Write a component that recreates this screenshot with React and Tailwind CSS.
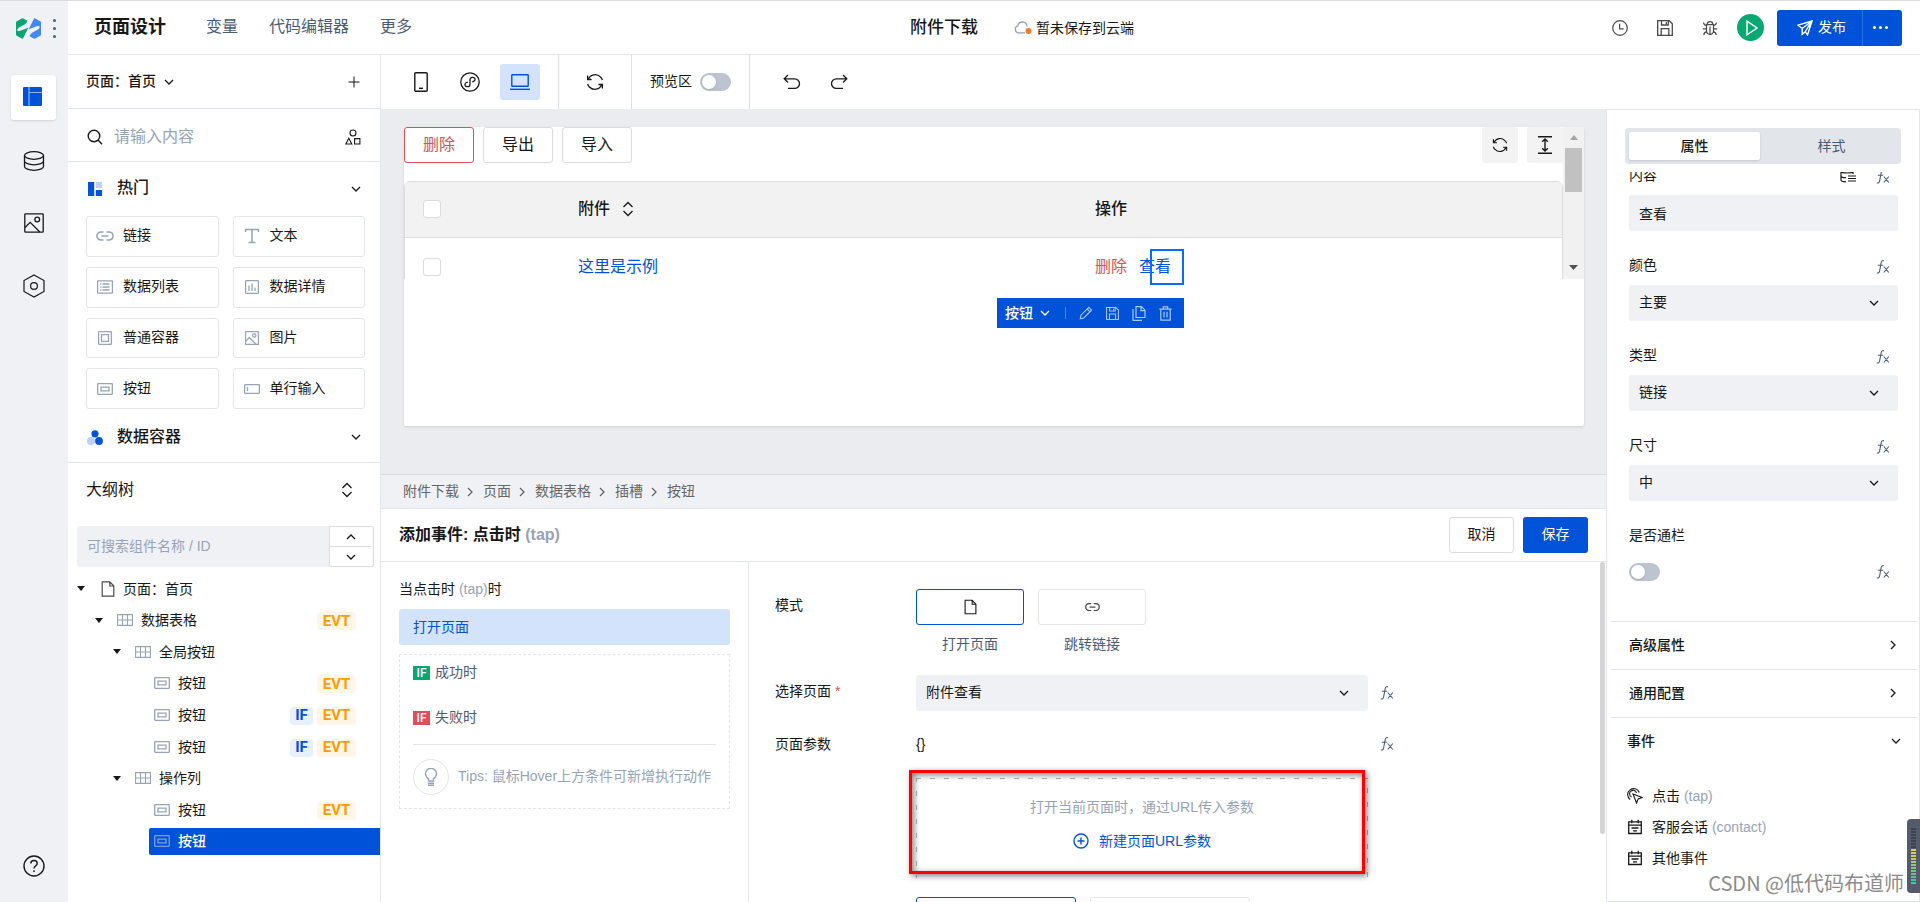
import React from "react";

const FONT = "font-['Liberation_Sans','Noto_Sans_CJK_SC',sans-serif]";

/* ---------- icons ---------- */

function Svg({ w = 16, h, box, className = "", sw = 1.2, children }) {
  return (
    <svg
      width={w}
      height={h || w}
      viewBox={box || `0 0 ${w} ${h || w}`}
      fill="none"
      stroke="currentColor"
      strokeWidth={sw}
      className={`shrink-0 ${className}`}
      aria-hidden="true"
    >
      {children}
    </svg>
  );
}

const ChevronDown = ({ className }) => (
  <Svg w={10} h={8} sw={1.3} className={className}><path d="M1 2l4 4 4-4" /></Svg>
);
const ChevronUp = ({ className }) => (
  <Svg w={10} h={8} sw={1.3} className={className}><path d="M1 6l4-4 4 4" /></Svg>
);
const ChevronRight = ({ className }) => (
  <Svg w={8} h={10} sw={1.3} className={className}><path d="M2 1l4 4-4 4" /></Svg>
);
const SortIcon = ({ className }) => (
  <Svg w={12} h={16} sw={1.3} className={className}><path d="M1.500 6L6 1.500 10.500 6M1.500 10L6 14.500 10.500 10" /></Svg>
);
const FxIcon = ({ className = "" }) => (
  <Svg w={14} h={14} sw={1.1} className={`text-[#4b5b76] ${className}`}>
    <path d="M8 .8C6.500 .3 5.500 1 5.200 2.600L3.600 11c-.3 1.600-1.200 2.300-2.800 2M1.800 5.300h5.400M7.800 6.500l5 6M12.800 6.500l-5 6" />
  </Svg>
);
const Logo = () => (
  <svg width="25" height="21" viewBox="0 0 25 21" className="shrink-0" aria-hidden="true">
    <path d="M0 4.500Q0 3.800 .8 3.300L5.800 .4Q6.500 0 7.200 .4L11.500 2.800Q11 5.200 8.500 6.600L3 9.600Q1 11 1.200 12.400 2.500 13.500 5 12.600L12.300 9.800 7 20.400Q6.500 21 5.800 20.600L.8 17.700Q0 17.200 0 16.500z" fill="#0aa574" />
    <path d="M25 16.500Q25 17.200 24.200 17.700L19.200 20.600Q18.500 21 17.800 20.600L13.500 18.200Q14 15.800 16.500 14.400L22 11.400Q24 10 23.800 8.600 22.500 7.500 20 8.400L12.700 11.200 18 .6Q18.500 0 19.200 .4L24.200 3.300Q25 3.800 25 4.500z" fill="#4386f5" />
  </svg>
);
const GridFill = () => (
  <svg width="19" height="19" viewBox="0 0 19 19" className="shrink-0" aria-hidden="true">
    <rect width="19" height="19" rx="1.200" fill="#0052d9" />
    <path d="M6 0v19M6 5.500h13" stroke="#8fb6f7" strokeWidth="1.200" />
  </svg>
);
const DbIcon = () => (
  <Svg w={22} h={20} sw={1.3}>
    <ellipse cx="11" cy="4.500" rx="9.500" ry="3.800" />
    <path d="M1.500 4.500v11c0 2.100 4.200 3.800 9.500 3.800s9.500-1.700 9.500-3.800v-11M1.500 10C1.500 12.100 5.700 13.800 11 13.800s9.500-1.700 9.500-3.800" />
  </Svg>
);
const ImageIcon = ({ w = 20, sw = 1.3, className }) => (
  <Svg w={w} box="0 0 20 20" sw={sw} className={className}>
    <rect x=".8" y=".8" width="18.400" height="18.400" rx=".8" />
    <circle cx="13.200" cy="6.500" r="2.400" />
    <path d="M1 14.500l5.200-5.200 9.600 9.700" />
  </Svg>
);
const HexIcon = () => (
  <Svg w={22} h={24} sw={1.2}>
    <path d="M11 1l10 5.500v11L11 23 1 17.500v-11z" />
    <circle cx="11" cy="12" r="3.400" />
  </Svg>
);
const HelpIcon = () => (
  <Svg w={22} sw={1.4}>
    <circle cx="11" cy="11" r="10" />
    <path d="M7.800 8.500c0-4 6.400-4 6.400 0 0 2.200-3.200 2.300-3.200 5M11 15.300v1.700" />
  </Svg>
);
const SearchIcon = () => (
  <Svg w={16} sw={1.4}><circle cx="7" cy="7" r="5.800" /><path d="M11 11l4 4.200" /></Svg>
);
const ShapesIcon = () => (
  <Svg w={16} sw={1.1}><circle cx="8" cy="4" r="3" /><path d="M3.800 9.200l3 5.800H.9zM9.600 9.600h5.300V15H9.600z" /></Svg>
);
const PlusIcon = () => (
  <Svg w={12} sw={1}><path d="M6 .5v11M.5 6h11" /></Svg>
);
const HotIcon = () => (
  <svg width="14" height="14" viewBox="0 0 14 14" className="shrink-0" aria-hidden="true">
    <path d="M0 0h6.200v14H0zM7.800 8H14v6H7.800z" fill="#0052d9" /><path d="M7.800 0H14v6.200H7.800z" fill="#bbd3fb" />
  </svg>
);
const DataIcon = () => (
  <svg width="16" height="15" viewBox="0 0 16 15" className="shrink-0" aria-hidden="true">
    <circle cx="4" cy="11" r="4" fill="#bbd3fb" /><circle cx="8" cy="3.800" r="3.600" fill="#0052d9" /><circle cx="12" cy="11" r="3.900" fill="#0052d9" />
  </svg>
);
const LinkIcon = ({ w = 18, sw = 1.5 }) => (
  <Svg w={w} h={w * 10 / 18} box="0 0 18 10" sw={sw}>
    <path d="M7.500 .9H5a4.100 4.100 0 000 8.200h2.500M10.500 .9H13a4.100 4.100 0 010 8.200h-2.500M5.500 5h7" />
  </Svg>
);
const TextIcon = () => (
  <Svg w={18} h={16} sw={1.5}><path d="M2.500 4V1.500h13V4M9 1.500v13M5.500 14.500h7" /></Svg>
);
const ListIcon = () => (
  <Svg w={18} h={14} sw={1.3}><rect x="1.600" y=".8" width="14.800" height="12.400" rx=".5" /><path d="M4.200 4h1.300M6.500 4h7M4.200 7h1.300M6.500 7h7M4.200 10h1.300M6.500 10h7" /></Svg>
);
const DetailIcon = () => (
  <Svg w={18} h={14} sw={1.3}><rect x="2.600" y=".7" width="12.800" height="12.600" rx=".5" /><path d="M6 5.500V11M9 3.500V11M12 7.500V11" /></Svg>
);
const BoxIcon = () => (
  <Svg w={18} h={14} sw={1.3}><rect x="2.600" y=".7" width="12.800" height="12.600" rx=".5" /><path d="M5.500 3.600h7v6.800h-7z" /></Svg>
);
const ButtonIcon = ({ className }) => (
  <Svg w={16} h={12} sw={1.3} className={className}><rect x=".7" y=".7" width="14.600" height="10.600" rx=".5" /><path d="M4 4.200h8v3.600H4z" /></Svg>
);
const InputIcon = () => (
  <Svg w={18} h={10} sw={1.3}><rect x="1.600" y=".7" width="14.800" height="8.600" rx=".5" /><path d="M4.500 3v4" /></Svg>
);
const TableIcon = () => (
  <Svg w={16} h={12} sw={1.1}><path d="M.6.6h14.800v10.800H.6zM.6 6h14.800M5.500.6v10.800M10.500.6v10.800" /></Svg>
);
const FileIcon = ({ w = 14, h = 16 }) => (
  <Svg w={w} h={h} box="0 0 14 16" sw={1.2}><path d="M1.200 .8h7.600l4 4.200v10.200H1.200zM8.800 .8V5h4" /></Svg>
);
const Caret = () => (
  <svg width="8" height="5" viewBox="0 0 8 5" fill="#181818" aria-hidden="true"><path d="M0 0h8L4 5z" /></svg>
);
const PhoneIcon = () => (
  <Svg w={14} h={20} sw={1.4}><rect x=".8" y=".8" width="12.400" height="18.400" rx="1" /><path d="M5 16.300h4" /></Svg>
);
const MiniProgramIcon = () => (
  <Svg w={20} sw={1.3}>
    <circle cx="10" cy="10" r="9.200" />
    <path d="M7.800 10.200C5.500 10.600 4.700 12 5 13.200c.7 2.200 5 2 5-.8V7.600c0-2.800 4.300-3 5-.8.3 1.200-.5 2.600-2.800 3" />
  </Svg>
);
const LaptopIcon = () => (
  <Svg w={20} h={16} sw={1.4}><rect x="1.800" y=".8" width="16.400" height="11.400" rx=".5" /><path d="M0 15.300h20" /></Svg>
);
const RefreshIcon = ({ w = 18 }) => (
  <Svg w={w} box="0 0 18 18" sw={1.3}>
    <path d="M2.300 6.200A7.400 7.400 0 0114.500 4M1.600 11a7.400 7.400 0 001.900 3.200M15.700 11.800A7.400 7.400 0 013.500 14M16.400 7a7.400 7.400 0 00-1.900-3M1.600 2.500v4h4M16.400 15.500v-4h-4" />
  </Svg>
);
const UndoIcon = ({ className }) => (
  <Svg w={18} h={16} sw={1.3} className={className}><path d="M5 1L1.200 4.800 5 8.500M1.500 4.800h10.200a4.800 4.800 0 010 9.600H5" /></Svg>
);
const HeightIcon = () => (
  <Svg w={14} h={18} sw={1.4}><path d="M0 .8h14M0 17.200h14M7 3v12M4.200 5.800L7 3l2.800 2.800M4.200 12.200L7 15l2.800-2.800" /></Svg>
);
const CloudIcon = () => (
  <svg width="18" height="14" viewBox="0 0 18 14" fill="none" className="shrink-0" aria-hidden="true">
    <path d="M11 11.800H4.500A3.600 3.600 0 013.800 4.800a4.700 4.700 0 019.300.6" stroke="#97a3b7" strokeWidth="1.300" />
    <circle cx="14.500" cy="10" r="3" fill="#ed7b2f" />
  </svg>
);
const ClockIcon = () => (
  <Svg w={16}><circle cx="8" cy="8" r="7.300" /><path d="M7.600 3.800v5h4" /></Svg>
);
const SaveIcon = ({ w = 16 }) => (
  <Svg w={w} box="0 0 16 16" sw={1.3}><path d="M.7 .7h11.600l3 3v11.600H.7zM4.500 .7V5h6.800V.7M4.200 15V8.600h7.600V15M9.300 2v2" /></Svg>
);
const BugIcon = () => (
  <Svg w={16} sw={1.2}><path d="M5.200 4.500a2.800 2.800 0 015.600 0zM4.500 4.600h7v6.200a3.500 3.500 0 01-7 0zM8 6.500v7.500M1.500 2.500c.3 2 1.500 2.800 3 3M14.500 2.500c-.3 2-1.500 2.800-3 3M.8 8.800h3.700M11.500 8.800h3.700M1.800 15c.2-2 1.300-3 2.900-3.300M14.200 15c-.2-2-1.300-3-2.900-3.300" /></Svg>
);
const PlaneIcon = () => (
  <Svg w={16} sw={1.4}><path d="M15 1L1 5.200l4.200 3.300v5.800l3-2.600 2.300 3.200zM15 1L5.200 8.500M15 1L8.200 11.700" /></Svg>
);
const PencilIcon = () => (
  <Svg w={14} sw={1.1}><path d="M1.200 12.800l.8-3.600L9.800 1.400l2.800 2.800L4.800 12zM8.200 3l2.800 2.800" /></Svg>
);
const CopyIcon = () => (
  <Svg w={14} h={15} sw={1.2}><path d="M4 .7h5.500l3.500 3.500v7.300H4zM9 .7v4h4M1 3v11.300h9" /></Svg>
);
const TrashIcon = () => (
  <Svg w={13} h={15} sw={1.2}><path d="M.3 3.200h12.400M1.800 3.200v11h9.400v-11M4.300 3V.8h4.400V3M5 5.800v5.800M8 5.800v5.800" /></Svg>
);
const BulbIcon = () => (
  <Svg w={14} h={18} sw={1.4}><path d="M4.500 13v-2.300a5.500 5.500 0 115 0V13zM4 15.200h6M4 17.200h6" /></Svg>
);
const TapIcon = () => (
  <Svg w={16} sw={1.1}><path d="M3.200 11.500A6 6 0 1112.300 4.500M4.500 9A3.500 3.500 0 119.500 5M6 6l9 3.500-3.800 1.500L9.500 15z" /></Svg>
);
const CalendarIcon = () => (
  <Svg w={16} sw={1.3}><path d="M1.700 2.800h12.600v11.700H1.700zM1.700 6.200h12.600M4.800 .8v3.400M11.200 .8v3.400M4.500 9h7M6 11.800h4" /></Svg>
);
const CirclePlus = () => (
  <Svg w={16} sw={1.4}><circle cx="8" cy="8" r="7" /><path d="M8 4.500v7M4.500 8h7" /></Svg>
);

/* ---------- small parts ---------- */

function Toggle({ label }) {
  return (
    <input
      type="checkbox"
      role="switch"
      aria-label={label}
      className="h-[18px] w-[31px] shrink-0 appearance-none rounded-full bg-[#bcc4d0] before:m-[2px] before:block before:size-[14px] before:rounded-full before:bg-white before:shadow before:content-['']"
    />
  );
}

function Select({ label, value }) {
  return (
    <div className="relative h-9 w-full">
      <select aria-label={label} className="h-9 w-full appearance-none rounded-[3px] bg-[#f0f1f5] px-[10px] pb-[2px] text-sm text-[#181818]">
        <option>{value}</option>
      </select>
      <ChevronDown className="pointer-events-none absolute right-[19px] top-[14px]" />
    </div>
  );
}

function Fx() {
  return <button type="button" aria-label="fx" className="shrink-0"><FxIcon /></button>;
}

/* ---------- data ---------- */

const COMPONENTS = [
  { name: "链接", icon: <LinkIcon /> },
  { name: "文本", icon: <TextIcon /> },
  { name: "数据列表", icon: <ListIcon /> },
  { name: "数据详情", icon: <DetailIcon /> },
  { name: "普通容器", icon: <BoxIcon /> },
  { name: "图片", icon: <ImageIcon w={14} sw={1.8} className="mx-[2px]" /> },
  { name: "按钮", icon: <ButtonIcon className="mx-px" /> },
  { name: "单行输入", icon: <InputIcon /> },
];

const TREE = [
  { name: "页面：首页", pad: "pl-[9px]", kind: "page" },
  { name: "数据表格", pad: "pl-[27px]", kind: "table", evt: true },
  { name: "全局按钮", pad: "pl-[45px]", kind: "table" },
  { name: "按钮", pad: "pl-[81px]", evt: true },
  { name: "按钮", pad: "pl-[81px]", evt: true, cond: true },
  { name: "按钮", pad: "pl-[81px]", evt: true, cond: true },
  { name: "操作列", pad: "pl-[45px]", kind: "table" },
  { name: "按钮", pad: "pl-[81px]", evt: true },
  { name: "按钮", pad: "pl-[81px]", active: true },
];

const CRUMBS = ["附件下载", "页面", "数据表格", "插槽", "按钮"];

const METER = [
  "bg-[#3d424f]", "bg-[#3d424f]", "bg-[#3d424f]", "bg-[#3d424f]", "bg-[#3d424f]", "bg-[#3d424f]", "bg-[#3d424f]",
  "bg-[#e8cf4a]", "bg-[#dccb4f]", "bg-[#d0cc58]", "bg-[#bccb62]", "bg-[#a8c96c]", "bg-[#94c876]",
  "bg-[#80c67e]", "bg-[#6cc488]", "bg-[#5ec492]", "bg-[#54c49a]", "bg-[#4cc4a0]", "bg-[#46c4a4]",
];

/* ---------- sections ---------- */

function Rail() {
  return (
    <nav className="flex w-[68px] shrink-0 flex-col items-center bg-[#f0f1f5] pr-px text-[#181818]">
      <div className="flex h-[54px] w-full items-center gap-3 pl-4">
        <Logo />
        <button type="button" aria-label="菜单" className="flex flex-col gap-[5px]">
          <span className="size-[3px] rounded-full bg-[#4b5b76]" />
          <span className="size-[3px] rounded-full bg-[#4b5b76]" />
          <span className="size-[3px] rounded-full bg-[#4b5b76]" />
        </button>
      </div>
      <button type="button" aria-label="页面" className="mt-5 flex size-[45px] items-center justify-center rounded-[3px] bg-white pb-[2px] pr-[2px] shadow">
        <GridFill />
      </button>
      <button type="button" aria-label="数据" className="mt-[31px]"><DbIcon /></button>
      <button type="button" aria-label="素材" className="mt-[42px]"><ImageIcon /></button>
      <button type="button" aria-label="设置" className="mt-[41px]"><HexIcon /></button>
      <button type="button" aria-label="帮助" className="mb-[25px] mt-auto"><HelpIcon /></button>
    </nav>
  );
}

function Header() {
  return (
    <header className="flex h-[54px] shrink-0 items-center border-b border-[#e6e8ed] pl-[26px] pr-[18px]">
      <div className="flex flex-[17] items-center pb-[2px]">
        <h1 className="text-lg font-bold text-[#181818]">页面设计</h1>
        <div className="ml-10 flex gap-[31px] text-base text-[#4b5b76]">
          <button type="button">变量</button>
          <button type="button">代码编辑器</button>
          <button type="button">更多</button>
        </div>
      </div>
      <div className="flex items-center">
        <span className="text-[17px] font-medium text-[#181818]">附件下载</span>
        <span className="ml-9 flex items-center gap-1 text-sm text-[#181818]"><CloudIcon />暂未保存到云端</span>
      </div>
      <div className="flex flex-[16] items-center justify-end text-[#4a4a4a]">
        <button type="button" aria-label="历史"><ClockIcon /></button>
        <button type="button" aria-label="保存" className="ml-[29px]"><SaveIcon /></button>
        <button type="button" aria-label="调试" className="ml-[29px]"><BugIcon /></button>
        <button type="button" aria-label="预览" className="ml-[19px] flex size-[27px] items-center justify-center rounded-full bg-[#07a872] pl-[2px] text-white">
          <Svg w={12} h={16} sw={1.4}><path d="M1 1.200L11 8 1 14.800z" /></Svg>
        </button>
        <div className="ml-[13px] flex h-9 overflow-hidden rounded-[3px] bg-[#0052d9] text-sm text-white">
          <button type="button" className="flex w-[86px] items-center justify-center gap-[5px] border-r border-[#2b6fe0] pl-1">
            <PlaneIcon /><span className="pb-[2px]">发布</span>
          </button>
          <button type="button" aria-label="更多" className="flex w-[39px] items-center justify-center gap-[3px] pr-[5px]">
            <span className="size-[3px] rounded-full bg-white" />
            <span className="size-[3px] rounded-full bg-white" />
            <span className="size-[3px] rounded-full bg-white" />
          </button>
        </div>
      </div>
    </header>
  );
}

function LeftPanel() {
  return (
    <aside className="flex w-[313px] shrink-0 flex-col border-r border-[#e2e5ea] text-[#181818]">
      <div className="flex h-[54px] shrink-0 items-center justify-between border-b border-[#e2e5ea] pl-[18px] pr-5">
        <button type="button" className="flex items-center gap-2 text-sm font-medium"><span className="pb-[2px]">页面：首页</span><ChevronDown /></button>
        <button type="button" aria-label="新建页面"><PlusIcon /></button>
      </div>
      <div className="flex h-[53px] shrink-0 items-center border-b border-[#e2e5ea] pl-[19px] pr-[19px] pt-[3px]">
        <SearchIcon />
        <input aria-label="搜索组件" placeholder="请输入内容" className="ml-[11px] min-w-0 flex-1 bg-transparent text-base outline-none placeholder:text-[#97a3b7]" />
        <button type="button" aria-label="组件分类"><ShapesIcon /></button>
      </div>
      <button type="button" className="flex h-[54px] shrink-0 items-center pl-5 pr-[19px] text-base font-medium">
        <HotIcon /><span className="ml-[15px] flex-1 pb-[2px] text-left">热门</span><ChevronDown />
      </button>
      <div className="grid h-[193px] shrink-0 grid-cols-2 grid-rows-4 gap-x-[14px] gap-y-[10px] pl-[18px] pr-[15px]">
        {COMPONENTS.map((c) => (
          <button key={c.name} type="button" className="flex items-center gap-[9px] rounded-[3px] border border-[#e2e5ea] pl-[9px] text-sm">
            <span className="text-[#97a3b7]">{c.icon}</span><span className="pb-[2px]">{c.name}</span>
          </button>
        ))}
      </div>
      <button type="button" className="flex h-[54px] shrink-0 items-center border-b border-[#e2e5ea] pl-[19px] pr-[19px] pt-[3px] text-base font-medium">
        <DataIcon /><span className="ml-[14px] flex-1 text-left">数据容器</span><ChevronDown />
      </button>

      <div className="flex h-[54px] shrink-0 items-center justify-between pl-[18px] pr-[27px] text-base">
        <h2>大纲树</h2>
        <button type="button" aria-label="展开"><SortIcon /></button>
      </div>
      <div className="mt-[9px] flex h-[41px] shrink-0 pl-[9px] pr-[6px]">
        <input aria-label="搜索大纲树" placeholder="可搜索组件名称 / ID" className="min-w-0 flex-1 rounded-l-[3px] bg-[#f0f1f5] px-[10px] pb-px text-sm outline-none placeholder:text-[#97a3b7]" />
        <div className="flex w-[45px] flex-col rounded-r-[2px] border border-[#dcdcdc] pr-[2px]">
          <button type="button" aria-label="上一个" className="flex flex-1 items-center justify-center border-b border-[#dcdcdc]"><ChevronUp /></button>
          <button type="button" aria-label="下一个" className="flex flex-1 items-center justify-center"><ChevronDown /></button>
        </div>
      </div>
      <ul className="mt-[6px] grid h-[284px] shrink-0 auto-rows-fr text-sm">
        {TREE.map((n, i) => (
          <li key={i} className={`flex items-center ${n.pad}`}>
            {n.kind && <span className="flex w-[17px] shrink-0"><Caret /></span>}
            <div
              className={
                n.active
                  ? "flex h-[27px] flex-1 items-center rounded-l-[2px] bg-[#0052d9] pl-[5px] font-medium text-white"
                  : "flex h-[27px] flex-1 items-center pl-[5px]"
              }
            >
              <span className={n.kind === "page" ? "ml-[2px] text-[#4a4a4a]" : n.active ? "text-[#7d9fd8]" : "text-[#97a3b7]"}>
                {n.kind === "page" ? <FileIcon /> : n.kind === "table" ? <TableIcon /> : <ButtonIcon />}
              </span>
              <span className="ml-2 flex-1">{n.name}</span>
              {n.cond && <span className="mr-1 mt-[2px] flex h-[18px] w-[23px] items-center justify-center rounded bg-[#e8f0fd] font-[Roboto] text-[15px] font-bold text-[#0052d9]">IF</span>}
              {n.evt && <span className="mr-6 mt-[2px] flex h-[18px] w-[39px] items-center justify-center rounded bg-[#fff6e8] font-[Roboto] text-[15px] font-bold text-[#ff9c00]">EVT</span>}
            </div>
          </li>
        ))}
      </ul>
    </aside>
  );
}

function Toolbar() {
  return (
    <div className="flex h-[54px] shrink-0 items-stretch text-[#181818]">
      <div className="flex w-[178px] items-center border-r border-[#dcdfe6] pl-[33px]">
        <button type="button" aria-label="手机"><PhoneIcon /></button>
        <button type="button" aria-label="小程序" className="ml-8"><MiniProgramIcon /></button>
        <button type="button" aria-label="电脑" className="ml-5 flex h-9 w-10 items-center justify-center rounded-[3px] bg-[#d4e3fc] text-[#0052d9]"><LaptopIcon /></button>
      </div>
      <div className="flex w-[73px] items-center justify-center border-r border-[#dcdfe6]">
        <button type="button" aria-label="刷新"><RefreshIcon /></button>
      </div>
      <label className="flex w-[118px] items-center gap-2 border-r border-[#dcdfe6] pl-[18px] text-sm">
        <span className="pb-[3px]">预览区</span><Toggle label="预览区" />
      </label>
      <div className="flex items-center gap-[29px] pl-[33px]">
        <button type="button" aria-label="撤销"><UndoIcon /></button>
        <button type="button" aria-label="重做"><UndoIcon className="-scale-x-100" /></button>
      </div>
    </div>
  );
}

function Canvas() {
  const box = "block size-[18px] appearance-none rounded-[3px] border border-[#dcdcdc] bg-white";
  return (
    <section className="h-[365px] shrink-0 bg-[#ebecf0] pl-[23px] pr-[22px] pt-[18px]">
      <div className="relative h-[299px] rounded-[2px] bg-white text-base text-[#181818] shadow">
        <div className="flex h-[152px] overflow-hidden">
          <div className="min-w-0 flex-1">
            <div className="flex gap-[9px]">
              <button type="button" className="h-9 w-[70px] rounded-[3px] border border-[#e34d59] text-[#e34d59]">删除</button>
              <button type="button" className="h-9 w-[70px] rounded-[3px] border border-[#dcdcdc]">导出</button>
              <button type="button" className="h-9 w-[70px] rounded-[3px] border border-[#dcdcdc]">导入</button>
              <button type="button" aria-label="刷新" className="ml-auto flex size-9 items-center justify-center rounded-[3px] bg-[#f3f3f3]"><RefreshIcon w={16} /></button>
              <button type="button" aria-label="行高" className="flex size-9 items-center justify-center rounded-[3px] bg-[#f3f3f3]"><HeightIcon /></button>
            </div>
            <div className="mt-[18px] overflow-hidden rounded-t-md border border-[#dcdcdc]">
              <table className="w-full table-fixed text-left">
                <thead>
                  <tr className="h-[55px] border-b border-[#dcdcdc] bg-[#f2f2f2]">
                    <th className="w-[157px] pl-[18px]"><input type="checkbox" aria-label="全选" className={box} /></th>
                    <th className="w-[517px] pl-4 font-medium">
                      <span className="flex items-center gap-3">附件<SortIcon /></span>
                    </th>
                    <th className="pl-4 font-medium">操作</th>
                  </tr>
                </thead>
                <tbody>
                  <tr className="h-[59px]">
                    <td className="pl-[18px]"><input type="checkbox" aria-label="选择行" className={box} /></td>
                    <td className="pl-4 text-[#0052d9]"><a href="#file">这里是示例</a></td>
                    <td className="pl-4">
                      <span className="flex gap-3">
                        <a href="#delete" className="text-[#e34d59]">删除</a>
                        <a href="#view" className="text-[#0052d9]">查看</a>
                      </span>
                    </td>
                  </tr>
                </tbody>
              </table>
            </div>
          </div>
          <div className="flex w-[21px] flex-col items-center bg-[#f1f1f1]">
            <svg width="8" height="5" viewBox="0 0 8 5" fill="#a3a3a3" className="my-2" aria-hidden="true"><path d="M0 5h8L4 0z" /></svg>
            <div className="h-11 w-[17px] bg-[#c1c1c1]" />
            <svg width="9" height="5" viewBox="0 0 9 5" fill="#505050" className="mb-[9px] mt-auto" aria-hidden="true"><path d="M0 0h9L4.500 5z" /></svg>
          </div>
        </div>
        {/* selection frame and its action bar float over the table */}
        <div className="absolute left-[746px] top-[122px] h-9 w-[34px] border-2 border-[#0a6cff]" />
        <div className="absolute left-[593px] top-[171px] flex h-[30px] w-[187px] items-center bg-[#0052d9] pl-2 text-sm text-white">
          <button type="button" className="flex items-center gap-[7px] font-medium">按钮<ChevronDown /></button>
          <span className="ml-[15px] h-3 w-px bg-[#4a86e8]" />
          <div className="ml-[13px] flex items-center gap-[13px] text-[#a9c6f5]">
            <button type="button" aria-label="编辑"><PencilIcon /></button>
            <button type="button" aria-label="保存"><SaveIcon w={13} /></button>
            <button type="button" aria-label="复制"><CopyIcon /></button>
            <button type="button" aria-label="删除"><TrashIcon /></button>
          </div>
        </div>
      </div>
    </section>
  );
}

function EventEditor() {
  return (
    <section className="flex min-h-0 flex-1 flex-col overflow-hidden border-t border-[#d8dbe3] text-sm text-[#181818]">
      <nav className="flex h-[34px] shrink-0 items-center border-b border-[#e2e5ea] bg-[#f0f1f5] pl-[22px] text-[#666]">
        {CRUMBS.map((c, i) => (
          <React.Fragment key={c}>
            {i > 0 && <ChevronRight className="ml-[7px] mr-[9px]" />}
            <a href="#crumb" className="pb-[2px]">{c}</a>
          </React.Fragment>
        ))}
      </nav>
      <div className="flex h-[53px] shrink-0 items-center border-b border-[#e2e5ea] pl-[18px] pr-[18px]">
        <h2 className="text-base font-bold">添加事件: 点击时 <span className="text-[#97a3b7]">(tap)</span></h2>
        <button type="button" className="ml-auto h-9 w-[65px] rounded-[3px] border border-[#d8dbe3] pb-[2px]">取消</button>
        <button type="button" className="ml-[9px] h-9 w-[65px] rounded-[3px] bg-[#0052d9] pb-[2px] text-white">保存</button>
      </div>
      <div className="flex min-h-0 flex-1">
        <div className="w-[368px] shrink-0 border-r border-[#e2e5ea] pl-[18px] pr-[18px] pt-[17px]">
          <p className="leading-5">当点击时 <span className="text-[#97a3b7]">(tap)</span>时</p>
          <button type="button" className="mt-[10px] flex h-9 w-full items-center rounded-[3px] bg-[#d4e3fc] pb-px pl-[14px] text-[#0052d9]">打开页面</button>
          <div className="mt-[9px] border border-dashed border-[#e2e5ea] px-[13px] text-[#4b5b76]">
            <div className="flex h-9 items-center gap-[5px]">
              <span className="flex h-[14px] w-[17px] items-center justify-center bg-[#07a872] font-[Roboto] text-xs font-medium text-white">IF</span>
              <span className="pb-[2px]">成功时</span>
            </div>
            <div className="mt-[9px] flex h-9 items-center gap-[5px]">
              <span className="flex h-[14px] w-[17px] items-center justify-center bg-[#e34d59] font-[Roboto] text-xs font-medium text-white">IF</span>
              <span className="pb-[2px]">失败时</span>
            </div>
            <div className="mb-[13px] mt-2 border-t border-[#e2e5ea] pt-[14px]">
              <div className="flex items-center gap-[9px] text-[#97a3b7]">
                <span className="flex size-9 shrink-0 items-center justify-center rounded-full border border-[#e2e5ea]"><BulbIcon /></span>
                <span className="pb-[2px]">Tips: 鼠标Hover上方条件可新增执行动作</span>
              </div>
            </div>
          </div>
        </div>

        <div className="min-w-0 flex-1 overflow-hidden pl-[26px] pt-[27px]">
          <div className="flex">
            <span className="w-[141px] shrink-0 pt-[6px] leading-5">模式</span>
            <div className="flex gap-[14px] text-[#4b5b76]">
              <div className="flex w-[108px] flex-col items-center gap-[9px]">
                <button type="button" aria-label="打开页面" className="flex h-9 w-full items-center justify-center rounded-[3px] border border-[#0052d9] text-[#181818]"><FileIcon w={13} /></button>
                <span className="leading-5">打开页面</span>
              </div>
              <div className="flex w-[108px] flex-col items-center gap-[9px]">
                <button type="button" aria-label="跳转链接" className="flex h-9 w-full items-center justify-center rounded-[3px] border border-[#e2e5ea] text-[#4a4a4a]"><LinkIcon w={15} /></button>
                <span className="leading-5">跳转链接</span>
              </div>
            </div>
          </div>
          <div className="mt-[21px] flex items-center">
            <span className="w-[141px] shrink-0 pb-1">选择页面 <span className="text-[#e34d59]">*</span></span>
            <div className="mr-3 w-[452px]"><Select label="选择页面" value="附件查看" /></div>
            <Fx />
          </div>
          <div className="mt-[23px] flex h-5 items-center">
            <span className="w-[141px] shrink-0">页面参数</span>
            <span className="mr-3 w-[452px]">{"{}"}</span>
            <Fx />
          </div>
          <div className="relative ml-[141px] mt-6 flex h-[100px] w-[452px] flex-col items-center pt-[19px]">
            {/* long-dash outline, wider than a CSS dashed border */}
            <svg className="absolute inset-0 size-full" fill="none" stroke="#b0b3ba" strokeDasharray="5 9" aria-hidden="true">
              <rect x="0" y="0" width="100%" height="110%" strokeWidth="2" />
            </svg>
            <p className="leading-5 text-[#97a3b7]">打开当前页面时，通过URL传入参数</p>
            <button type="button" className="mt-[14px] flex items-center gap-[10px] leading-5 text-[#0052d9]"><CirclePlus />新建页面URL参数</button>
            <div className="pointer-events-none absolute -left-[7px] -top-2 h-[104px] w-[456px] border-[3px] border-[#ff0000] shadow-[2px_2px_6px_rgba(0,0,0,0.5),inset_2px_2px_6px_rgba(0,0,0,0.5)]" />
          </div>
          <div className="ml-[141px] mt-[19px] flex gap-[14px]">
            <button type="button" aria-label="方式一" className="h-9 w-40 rounded-[3px] border border-[#0052d9]" />
            <button type="button" aria-label="方式二" className="h-9 w-40 rounded-[3px] border border-[#e2e5ea]" />
          </div>
        </div>
        <div className="w-[6px] shrink-0"><div className="h-[272px] w-[5px] rounded-full bg-[#d4d4d4]" /></div>
      </div>
    </section>
  );
}

function Field({ label, children }) {
  return (
    <div className="h-[90px]">
      <div className="flex h-[30px] items-start justify-between pr-2 leading-5">{label}<span className="pt-1"><Fx /></span></div>
      {children}
    </div>
  );
}

function RightPanel() {
  return (
    <aside className="flex w-[314px] shrink-0 flex-col border border-[#e2e5ea] text-sm text-[#181818]">
      <div className="ml-[18px] mr-[18px] mt-[18px] flex h-9 shrink-0 rounded bg-[#e2e5ea] p-1">
        <button type="button" className="w-[131px] rounded-[2px] bg-white pb-px font-medium shadow-sm">属性</button>
        <button type="button" className="flex-1 pb-px pl-[6px] text-[#4b5b76]">样式</button>
      </div>
      <div className="mt-2 h-[449px] shrink-0 overflow-hidden pl-[22px] pr-[21px]">
        <div className="-mt-[7px] h-[90px]">
          <div className="flex h-[30px] items-start leading-5">
            <span className="flex-1">内容</span>
            <span className="mr-5 pt-1">
              <Svg w={16} h={14} sw={1.2}><path d="M1 2.500c0-2 12-2 12 0s-12 2-12 0v8.500c0 1.300 2.500 1.800 5 1.800M1 7c0 1.200 2.500 1.700 5 1.700M13 2.500V5M8 7h8M8 9.500h8M8 12h8" /></Svg>
            </span>
            <span className="mr-2 pt-1"><Fx /></span>
          </div>
          <input aria-label="内容" defaultValue="查看" className="h-9 w-full rounded-[3px] bg-[#f0f1f5] px-[10px] outline-none" />
        </div>
        <Field label="颜色"><Select label="颜色" value="主要" /></Field>
        <Field label="类型"><Select label="类型" value="链接" /></Field>
        <Field label="尺寸"><Select label="尺寸" value="中" /></Field>
        <div className="leading-5">是否通栏</div>
        <div className="mt-[18px] flex items-center justify-between pr-2"><Toggle label="是否通栏" /><Fx /></div>
      </div>
      <div className="ml-1 mr-[2px]">
        <button type="button" className="flex h-12 w-full items-center justify-between border-t border-[#e2e5ea] pb-px pl-[18px] pr-5 font-medium">高级属性<ChevronRight /></button>
        <button type="button" className="flex h-12 w-full items-center justify-between border-t border-[#e2e5ea] pb-px pl-[18px] pr-5 font-medium">通用配置<ChevronRight /></button>
        <button type="button" className="flex h-12 w-full items-center justify-between border-t border-[#e2e5ea] pb-px pl-4 pr-4 font-medium">事件<ChevronDown /></button>
      </div>
      <ul className="ml-5 mt-[15px]">
        <li className="flex h-[31px] items-center gap-[9px]"><TapIcon /><span>点击 <span className="text-[#97a3b7]">(tap)</span></span></li>
        <li className="flex h-[31px] items-center gap-[9px]"><CalendarIcon /><span>客服会话 <span className="text-[#97a3b7]">(contact)</span></span></li>
        <li className="flex h-[31px] items-center gap-[9px]"><CalendarIcon /><span>其他事件</span></li>
      </ul>
    </aside>
  );
}

export default function App() {
  return (
    <div className={`relative flex h-screen overflow-hidden border-t border-[#dcdcdc] bg-white ${FONT}`}>
      <Rail />
      <div className="flex min-w-0 flex-1 flex-col">
        <Header />
        <div className="flex min-h-0 flex-1">
          <LeftPanel />
          <div className="flex min-w-0 flex-1 flex-col">
            <Toolbar />
            <div className="flex min-h-0 flex-1">
              <div className="flex min-w-0 flex-1 flex-col">
                <Canvas />
                <EventEditor />
              </div>
              <RightPanel />
            </div>
          </div>
        </div>
      </div>

      <div className="absolute bottom-[5px] right-4 font-['Noto_Sans_CJK_SC',sans-serif] text-xl leading-7 text-[#8c8c8c]">CSDN @低代码布道师</div>
      <div className="absolute bottom-[9px] right-0 flex h-[74px] w-[13px] flex-col items-center justify-center gap-px rounded-l-[4px] bg-[#565b6b]">
        {METER.map((c, i) => (
          <span key={i} className={`h-[2px] w-[5px] ${c}`} />
        ))}
      </div>
    </div>
  );
}
